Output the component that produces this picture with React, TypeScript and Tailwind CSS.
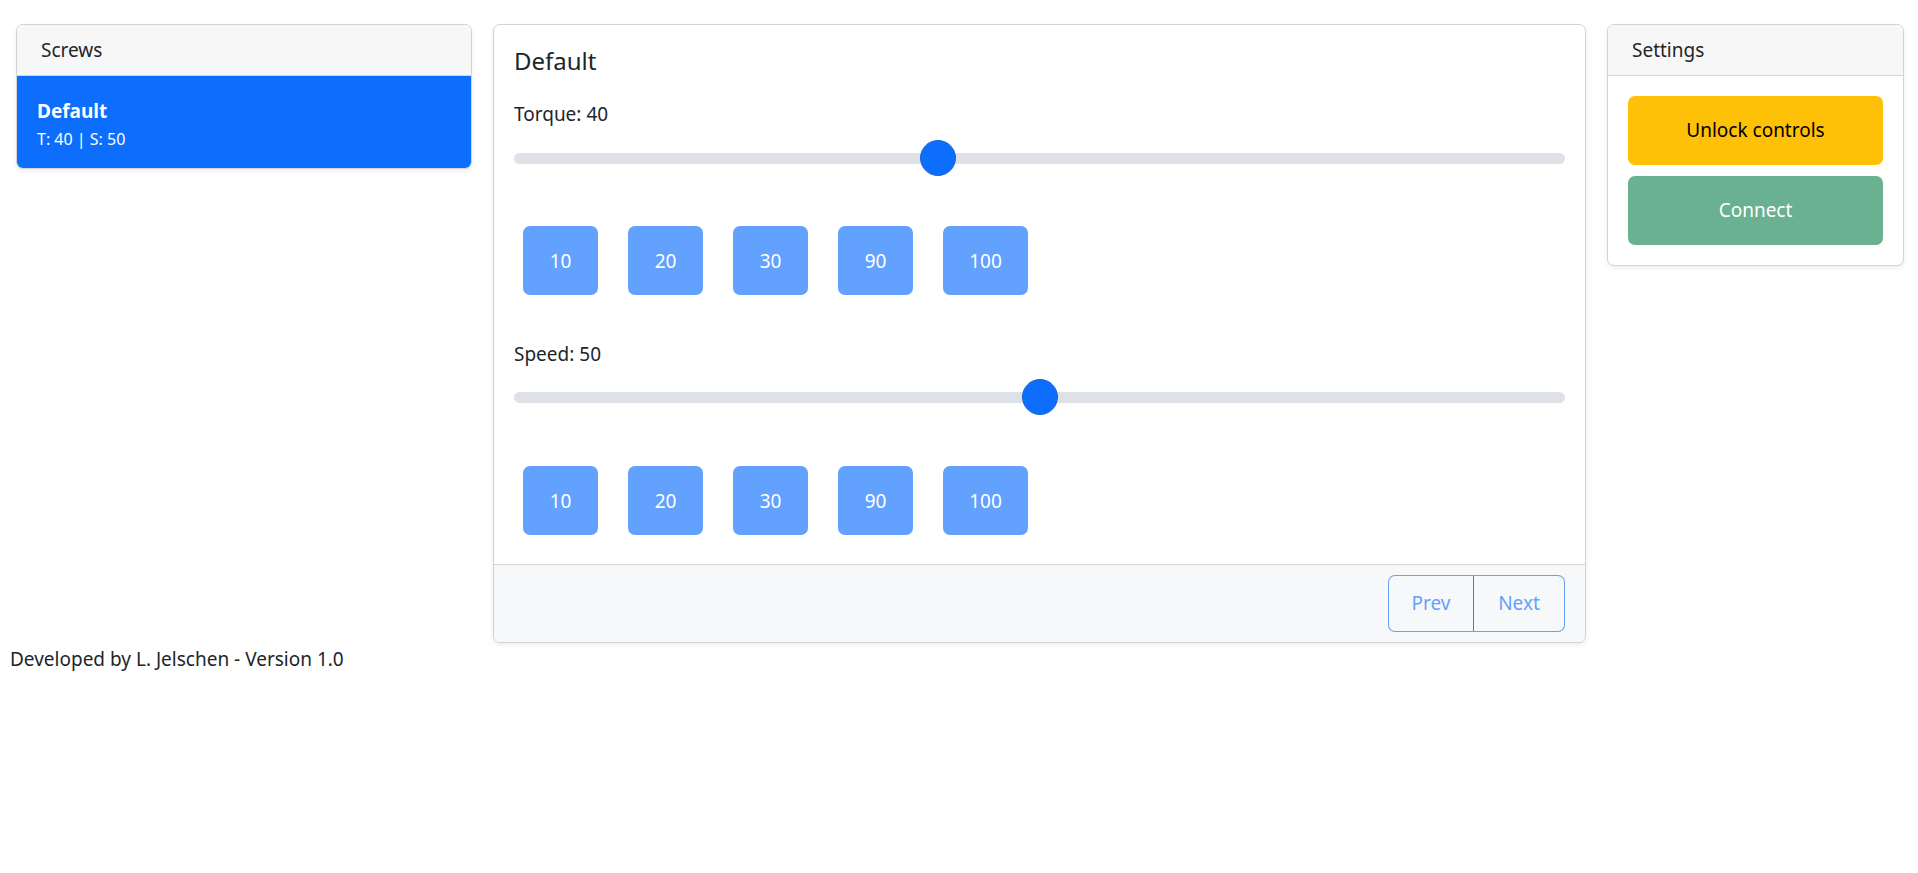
import { useState } from "react";

const font = { fontFamily: '"Segoe UI", "Noto Sans", "Open Sans", sans-serif' };

type SliderProps = { value: number; className?: string };

function Slider({ value, className }: SliderProps) {
  return (
    <div className={`relative h-[36px] flex items-center ${className ?? ""}`}>
      <div className="w-full h-[11px] rounded-full bg-[#dee2e6]" />
      <div
        className="absolute top-0 w-[36px] h-[36px] rounded-full bg-[#0d6efd] border border-[#1763d8]"
        style={{ left: `calc(${value / 100} * (100% - 36px))` }}
      />
    </div>
  );
}

function QuickButtons({ values, className }: { values: number[]; className?: string }) {
  return (
    <div className={`flex gap-[30px] pl-[9px] ${className ?? ""}`}>
      {values.map((v) => (
        <button
          key={v}
          type="button"
          disabled
          className={`${v >= 100 ? "w-[85px]" : "w-[75px]"} h-[69px] rounded-[7px] bg-[#62a1fe] text-white text-[19px] leading-[30px]`}
        >
          {v}
        </button>
      ))}
    </div>
  );
}

export default function App() {
  const [torque] = useState(40);
  const [speed] = useState(50);
  const presets = [10, 20, 30, 90, 100];

  return (
    <div className="w-full min-h-[873px] bg-white text-[#212529]" style={font}>
      <div className="flex items-start gap-[21px] pl-[16px] pt-[24px]">
        {/* screws list */}
        <div className="w-[456px] rounded-[7px] border border-[#d3d3d3] bg-white shadow-[0_2px_5px_rgba(0,0,0,0.08)] overflow-hidden">
          <div className="bg-[#f7f7f7] border-b border-[#d3d3d3] px-[24px] py-[10px] text-[19px] leading-[30px]">
            Screws
          </div>
          <div className="bg-[#0d6efd] text-white px-[20px] pt-[20px] pb-[16px]">
            <div className="font-bold text-[19px] leading-[30px]">Default</div>
            <div className="text-[16px] leading-[26px]">T: 40 | S: 50</div>
          </div>
        </div>

        {/* editor */}
        <div className="w-[1093px] rounded-[7px] border border-[#d3d3d3] bg-white shadow-[0_2px_5px_rgba(0,0,0,0.08)] overflow-hidden">
          <div className="px-[20px] pt-[20px] pb-[29px]">
            <h5 className="text-[24px] leading-[31px]">Default</h5>
            <div className="mt-[23px] text-[19px] leading-[30px]">Torque: {torque}</div>
            <Slider value={torque} className="mt-[11px]" />
            <QuickButtons values={presets} className="mt-[50px]" />
            <div className="mt-[44px] text-[19px] leading-[30px]">Speed: {speed}</div>
            <Slider value={speed} className="mt-[10px]" />
            <QuickButtons values={presets} className="mt-[51px]" />
          </div>
          <div className="border-t border-[#d3d3d3] bg-[#f7f8f9] px-[20px] py-[10px] flex justify-end">
            <div className="flex h-[57px] text-[19px] text-[#62a1fe]">
              <button
                type="button"
                disabled
                className="w-[86px] rounded-l-[7px] border border-[#62a1fe] border-r-[#2f7ffd]"
              >
                Prev
              </button>
              <button
                type="button"
                disabled
                className="w-[91px] rounded-r-[7px] border border-l-0 border-[#62a1fe]"
              >
                Next
              </button>
            </div>
          </div>
        </div>

        {/* settings */}
        <div className="w-[297px] rounded-[7px] border border-[#d3d3d3] bg-white shadow-[0_2px_5px_rgba(0,0,0,0.08)] overflow-hidden">
          <div className="bg-[#f7f7f7] border-b border-[#d3d3d3] px-[24px] py-[10px] text-[19px] leading-[30px]">
            Settings
          </div>
          <div className="p-[20px] flex flex-col gap-[11px]">
            <button
              type="button"
              className="h-[69px] rounded-[7px] bg-[#ffc107] text-black text-[19px]"
            >
              Unlock controls
            </button>
            <button
              type="button"
              disabled
              className="h-[69px] rounded-[7px] bg-[#69b190] text-white text-[19px]"
            >
              Connect
            </button>
          </div>
        </div>
      </div>

      <div className="pl-[10px] pt-[1px] text-[19px] leading-[30px]">
        Developed by L. Jelschen - Version 1.0
      </div>
    </div>
  );
}
